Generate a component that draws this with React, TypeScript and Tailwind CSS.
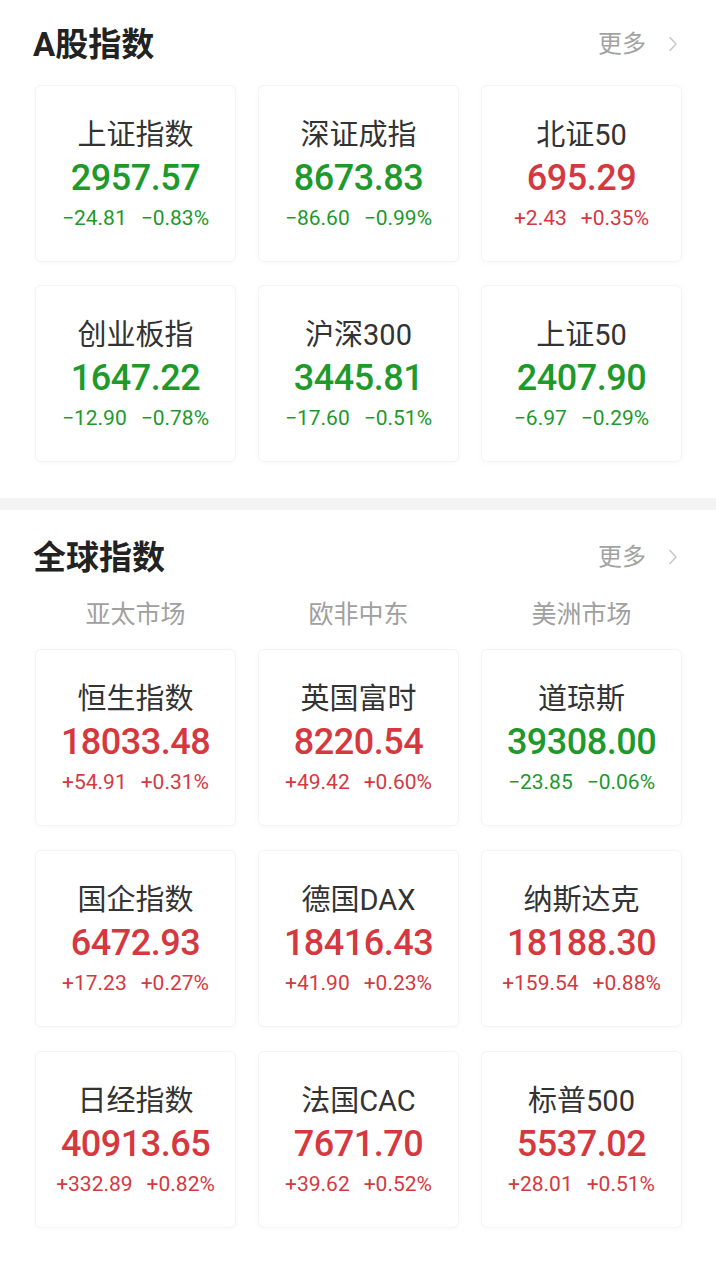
import React from 'react';

type Quote = {
    name: string;
    value: string;
    change: string;
    pct: string;
    up: boolean;
};

const aShares: Quote[] = [
    { name: '上证指数', value: '2957.57', change: '−24.81', pct: '−0.83%', up: false },
    { name: '深证成指', value: '8673.83', change: '−86.60', pct: '−0.99%', up: false },
    { name: '北证50', value: '695.29', change: '+2.43', pct: '+0.35%', up: true },
    { name: '创业板指', value: '1647.22', change: '−12.90', pct: '−0.78%', up: false },
    { name: '沪深300', value: '3445.81', change: '−17.60', pct: '−0.51%', up: false },
    { name: '上证50', value: '2407.90', change: '−6.97', pct: '−0.29%', up: false },
];

const globals: Quote[] = [
    { name: '恒生指数', value: '18033.48', change: '+54.91', pct: '+0.31%', up: true },
    { name: '英国富时', value: '8220.54', change: '+49.42', pct: '+0.60%', up: true },
    { name: '道琼斯', value: '39308.00', change: '−23.85', pct: '−0.06%', up: false },
    { name: '国企指数', value: '6472.93', change: '+17.23', pct: '+0.27%', up: true },
    { name: '德国DAX', value: '18416.43', change: '+41.90', pct: '+0.23%', up: true },
    { name: '纳斯达克', value: '18188.30', change: '+159.54', pct: '+0.88%', up: true },
    { name: '日经指数', value: '40913.65', change: '+332.89', pct: '+0.82%', up: true },
    { name: '法国CAC', value: '7671.70', change: '+39.62', pct: '+0.52%', up: true },
    { name: '标普500', value: '5537.02', change: '+28.01', pct: '+0.51%', up: true },
];

const More = () => (
    <div className="flex items-center gap-[22px] text-[24px] leading-[36px] text-[#a3a3a3]">
        <span>更多</span>
        <svg width="10" height="16" viewBox="0 0 10 16" fill="none" className="mr-[2px]">
            <path d="M2 1.5 8 8l-6 6.5" stroke="#c9c9c9" strokeWidth="1.6" strokeLinecap="round" strokeLinejoin="round" />
        </svg>
    </div>
);

const Card = ({ q }: { q: Quote }) => {
    const color = q.up ? 'text-[#d5393f]' : 'text-[#1d9a2b]';
    return (
        <div className="h-[177px] rounded-[6px] border border-[#f4f4f4] bg-white shadow-[0_1px_6px_rgba(0,0,0,0.03)] pt-[31px] flex flex-col items-center">
            <div className="text-[29px] leading-[36px] text-[#333333]">{q.name}</div>
            <div className={`text-[36px] leading-[50px] font-medium tracking-[-0.5px] ${color}`}>{q.value}</div>
            <div className={`flex gap-[14px] text-[21px] leading-[30px] ${color}`}>
                <span>{q.change}</span>
                <span>{q.pct}</span>
            </div>
        </div>
    );
};

export default function App() {
    return (
        <div
            className="w-[716px] min-h-[1264px] bg-white"
            style={{ fontFamily: "Roboto, 'Noto Sans CJK SC', sans-serif" }}
        >
            {/* A股 */}
            <section className="pb-[36px]">
                <div className="h-[85px] pt-[26px] pl-[33px] pr-[36px] flex items-start justify-between">
                    <h2 className="text-[33px] leading-[38px] font-bold text-[#222222]">A股指数</h2>
                    <More />
                </div>
                <div className="grid grid-cols-3 gap-x-[22px] gap-y-[23px] pl-[35px] pr-[34px]">
                    {aShares.map((q) => (
                        <Card key={q.name} q={q} />
                    ))}
                </div>
            </section>

            <div className="h-[12px] bg-[#f4f4f4]" />

            {/* 全球 */}
            <section className="pb-[36px]">
                <div className="pt-[29px] pl-[33px] pr-[36px] flex items-start justify-between">
                    <h2 className="text-[33px] leading-[38px] font-bold text-[#222222]">全球指数</h2>
                    <More />
                </div>
                <div className="grid grid-cols-3 gap-x-[22px] pl-[35px] pr-[34px] mt-[22px] text-[25px] leading-[32px] text-[#a0a0a0] text-center">
                    <span>亚太市场</span>
                    <span>欧非中东</span>
                    <span>美洲市场</span>
                </div>
                <div className="grid grid-cols-3 gap-x-[22px] gap-y-[24px] pl-[35px] pr-[34px] mt-[18px]">
                    {globals.map((q) => (
                        <Card key={q.name} q={q} />
                    ))}
                </div>
            </section>
        </div>
    );
}
